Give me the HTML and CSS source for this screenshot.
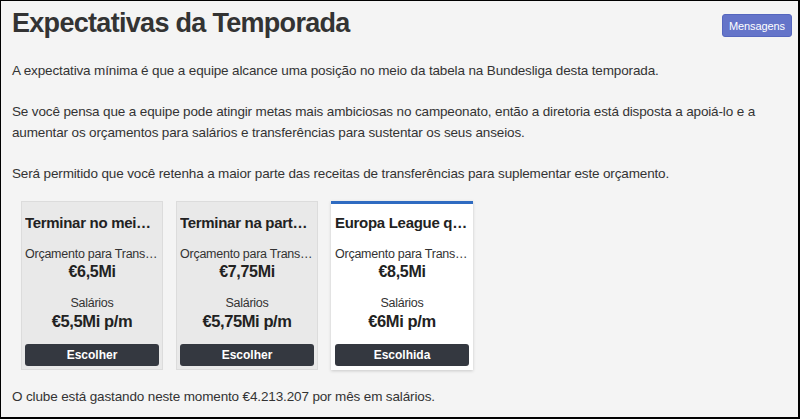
FILE: index.html
```html
<!DOCTYPE html>
<html lang="pt">
<head>
<meta charset="utf-8">
<title>Expectativas da Temporada</title>
<link rel="stylesheet" href="styles.css">
</head>
<body>
<div class="frame">
  <div class="header">
    <h1 class="title">Expectativas da Temporada</h1>
    <button class="msg-btn">Mensagens</button>
  </div>
  <p class="para">A expectativa mínima é que a equipe alcance uma posição no meio da tabela na Bundesliga desta temporada.</p>
  <p class="para">Se você pensa que a equipe pode atingir metas mais ambiciosas no campeonato, então a diretoria está disposta a apoiá-lo e a aumentar os orçamentos para salários e transferências para sustentar os seus anseios.</p>
  <p class="para">Será permitido que você retenha a maior parte das receitas de transferências para suplementar este orçamento.</p>
  <div class="cards">
    <div class="card">
      <div class="card-title">Terminar no meio da tabela</div>
      <div class="label">Orçamento para Transferências</div>
      <div class="value">€6,5Mi</div>
      <div class="label gap">Salários</div>
      <div class="value big">€5,5Mi p/m</div>
      <button class="choose">Escolher</button>
    </div>
    <div class="card">
      <div class="card-title">Terminar na parte de cima da tabela</div>
      <div class="label">Orçamento para Transferências</div>
      <div class="value">€7,75Mi</div>
      <div class="label gap">Salários</div>
      <div class="value big">€5,75Mi p/m</div>
      <button class="choose">Escolher</button>
    </div>
    <div class="card selected">
      <div class="card-title">Europa League qualificação</div>
      <div class="label">Orçamento para Transferências</div>
      <div class="value">€8,5Mi</div>
      <div class="label gap">Salários</div>
      <div class="value big">€6Mi p/m</div>
      <button class="choose">Escolhida</button>
    </div>
  </div>
  <p class="para footer">O clube está gastando neste momento €4.213.207 por mês em salários.</p>
</div>
</body>
</html>
```

FILE: styles.css
```css
html, body {
  margin: 0;
  padding: 0;
}
body {
  font-family: "Liberation Sans", Arial, sans-serif;
  color: #333;
  background: #f4f4f4;
}
.frame {
  box-sizing: border-box;
  width: 800px;
  height: 419px;
  border: 1px solid #000;
  border-right-width: 2px;
  border-bottom-width: 2px;
  padding: 0 6px 0 11px;
  background: #f4f4f4;
  overflow: hidden;
}
.header {
  display: flex;
  justify-content: space-between;
  align-items: flex-start;
}
.title {
  margin: 5px 0 0 0;
  font-size: 27px;
  letter-spacing: -0.7px;
  line-height: 34px;
  font-weight: bold;
  color: #333;
}
.msg-btn {
  margin-top: 13px;
  width: 70px;
  height: 23px;
  padding: 0;
  font-family: inherit;
  font-size: 11px;
  letter-spacing: -0.1px;
  color: #fff;
  background: #6474c9;
  border: 1px solid #5566be;
  border-radius: 3px;
}
.para {
  margin: 0;
  font-size: 13.5px;
  letter-spacing: -0.14px;
  line-height: 21px;
  color: #333;
}
.header + .para {
  margin-top: 20px;
}
.para + .para {
  margin-top: 20px;
}
.cards {
  display: flex;
  gap: 13px;
  margin: 17px 0 0 9px;
}
.card {
  box-sizing: border-box;
  width: 142px;
  height: 169px;
  padding: 10px 3px 3px;
  background: #e9e9e9;
  border: 1px solid #dcdcdc;
  text-align: center;
  display: flex;
  flex-direction: column;
}
.card.selected {
  background: #fff;
  border: none;
  border-top: 3px solid #2f6bc1;
  padding: 8px 4px 4px;
  box-shadow: 0 1px 3px rgba(0, 0, 0, 0.18);
}
.card-title {
  font-size: 15px;
  letter-spacing: -0.3px;
  font-weight: bold;
  line-height: 22px;
  color: #222;
  white-space: nowrap;
  overflow: hidden;
  text-overflow: ellipsis;
}
.label {
  margin-top: 12px;
  font-size: 12.5px;
  letter-spacing: -0.25px;
  line-height: 16px;
  color: #333;
  white-space: nowrap;
  overflow: hidden;
  text-overflow: ellipsis;
}
.label.gap {
  margin-top: 13px;
}
.value {
  font-size: 16px;
  letter-spacing: -0.3px;
  font-weight: bold;
  line-height: 20px;
  color: #222;
}
.value.big {
  font-size: 16.5px;
  letter-spacing: -0.4px;
  line-height: 20px;
}
.choose {
  margin-top: auto;
  height: 22px;
  padding: 0;
  border: none;
  border-radius: 3px;
  background: #343840;
  color: #fff;
  font-family: inherit;
  font-size: 12px;
  font-weight: bold;
}
.footer {
  margin-top: 16px;
}
```
